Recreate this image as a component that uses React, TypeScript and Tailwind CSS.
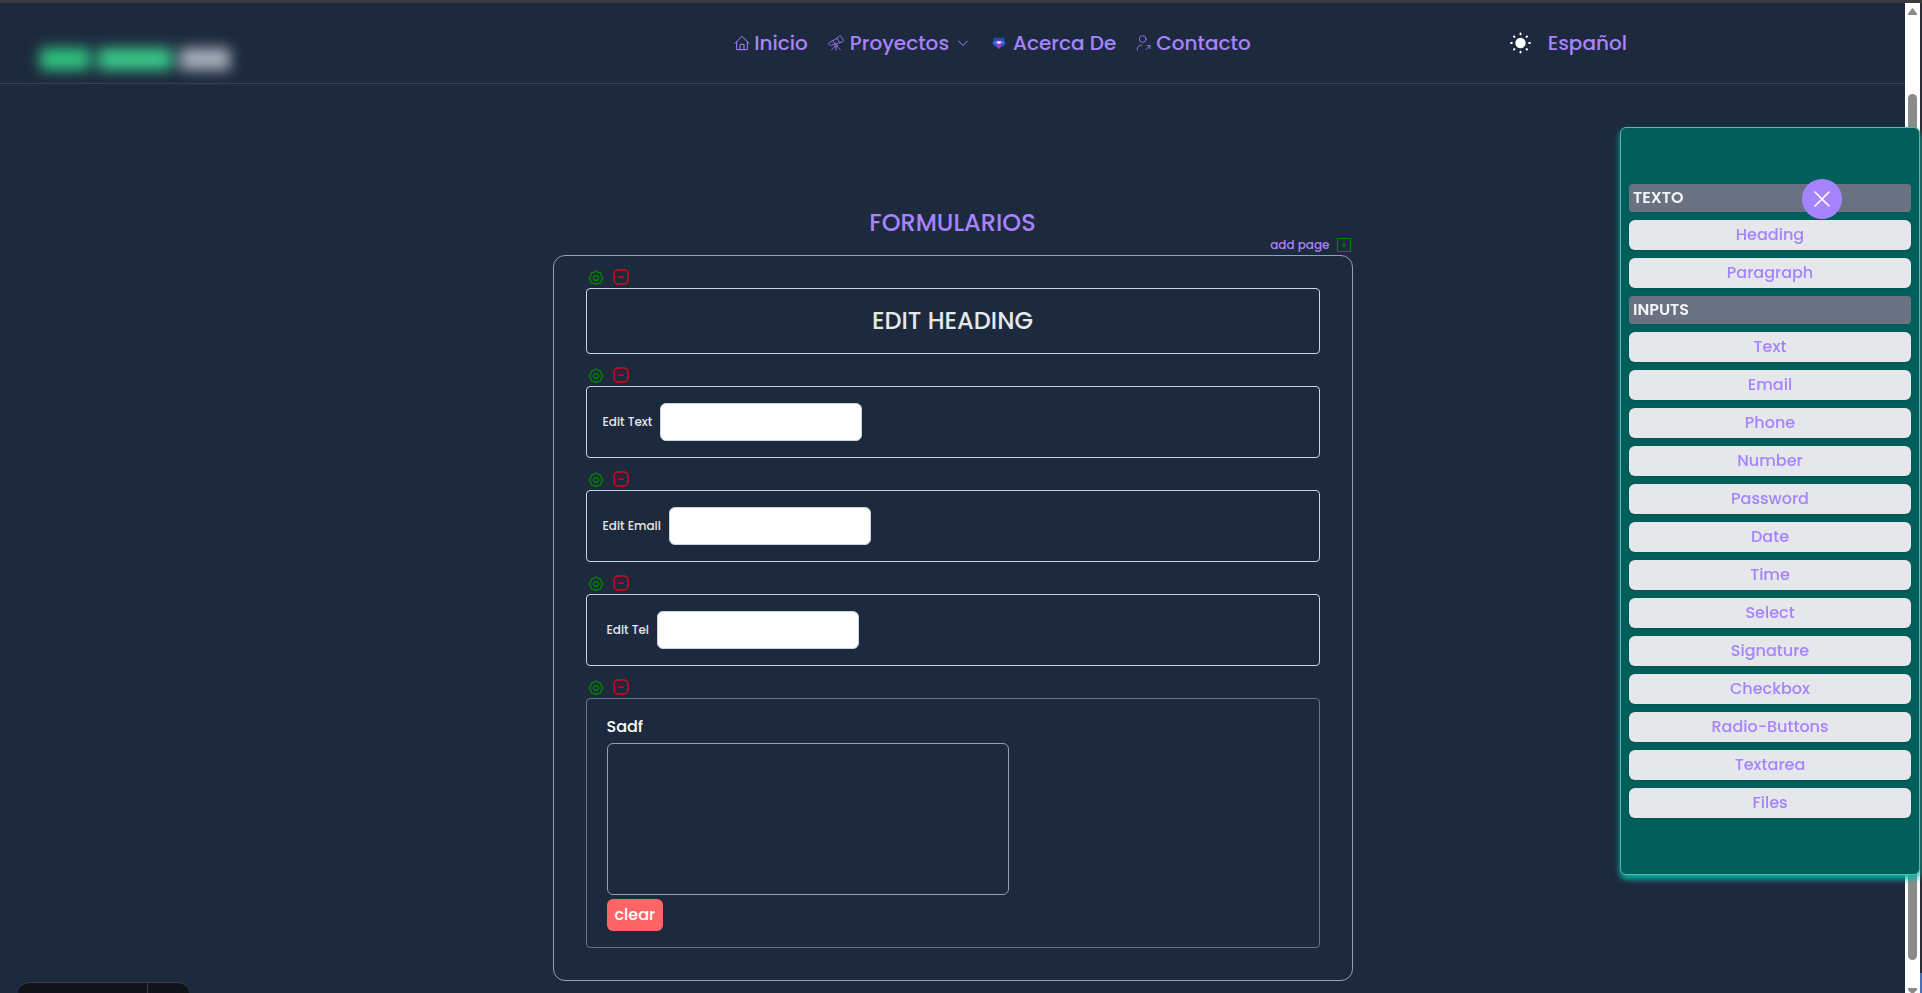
import React from "react";

type FieldType = "text" | "email" | "tel";

const textItems = ["Heading", "Paragraph"];
const inputItems = [
  "Text",
  "Email",
  "Phone",
  "Number",
  "Password",
  "Date",
  "Time",
  "Select",
  "Signature",
  "Checkbox",
  "Radio-Buttons",
  "Textarea",
  "Files",
];

function HomeIcon() {
  return (
    <svg className="size-4" viewBox="0 0 24 24" fill="none" stroke="currentColor" strokeWidth="1.5" strokeLinecap="round" strokeLinejoin="round" aria-hidden="true">
      <path d="M1.500 12.500 12 2l10.500 10.500M4 10.500V22h16V10.500" />
      <path d="M9 22v-8h6v8" />
    </svg>
  );
}

function TelescopeIcon() {
  return (
    <svg className="size-4" viewBox="0 0 24 24" fill="none" stroke="currentColor" strokeWidth="1.2" strokeLinecap="round" strokeLinejoin="round" aria-hidden="true">
      <path d="M17.500 1.200c.8-.4 1.600-.2 2 .6l3.300 6.400c.4.800.1 1.600-.7 1.900l-4.300 1.400-4.300-6.300z" />
      <path d="M13.500 5.200 2 11.200c-.9.500-1.200 1.400-.8 2.200l.6 1.200c.4.900 1.300 1.200 2.200.9l13.800-4M7.500 8.500l2.800 5" />
      <circle cx="12" cy="16" r="1.800" />
      <path d="M12 17.800V23M10.500 17 5 22.500M13.500 17l5.500 5.500" />
    </svg>
  );
}

function ChevronIcon() {
  return (
    <svg className="size-3" viewBox="0 0 12 12" fill="none" stroke="currentColor" strokeWidth="1" strokeLinecap="round" strokeLinejoin="round" aria-hidden="true">
      <path d="M1.500 4 6 8.500 10.500 4" />
    </svg>
  );
}

function BadgeIcon() {
  return (
    <svg className="size-5" viewBox="-2 -2 20 20" aria-hidden="true">
      <path d="M3 2l2.500 1.200L8 2.500l2.500.7L13 2l.6 4L15 8l-2 3-3 1.500L8 14l-2-1.500L3 11 1 8l1.400-2z" fill="#1e4fb0" />
      <path d="M5.500 5.500h5l.5 4L8 14 5 9.500z" fill="#a23fd0" />
      <path d="M5.800 6.500h4.400v1.300L8 8.800 5.800 7.800z" fill="#fff" />
      <path d="M3 6l2 .5v3L3 9zM13 6l-2 .5v3l2-.5z" fill="#2b7fff" />
    </svg>
  );
}

function ContactIcon() {
  return (
    <svg className="size-4" viewBox="0 0 24 24" fill="none" stroke="currentColor" strokeWidth="1.200" strokeLinecap="round" strokeLinejoin="round" aria-hidden="true">
      <circle cx="10" cy="6" r="5" />
      <path d="M2 23v-1.500c0-4 2.500-6.500 7-6.500M15 22l6-6M16.500 16H21v4.500" />
    </svg>
  );
}

function SunIcon() {
  return (
    <svg className="size-6" viewBox="0 0 24 24" fill="#fff" stroke="#fff" strokeLinecap="round" aria-hidden="true">
      <circle cx="12.500" cy="12" r="5.200" stroke="none" />
      <path strokeWidth="2" d="M12.500 2.600v.7M12.500 20.700v.7M3.100 12h.7M21.200 12h.7M6 5.500l.4.400M18.600 18.100l.4.400M6 18.500l.4-.4M18.600 5.900l.4-.4" />
    </svg>
  );
}

function GearIcon() {
  return (
    <svg className="size-4" viewBox="0 -1 16 16" fill="none" stroke="#008000" strokeWidth="1.400" strokeLinejoin="round" aria-hidden="true">
      <path d="M8 0.900 10.100 2.500 12.900 3.100 13.200 5.800 14.900 8 13.200 10.200 12.900 12.900 10.100 13.300 8 14.600 5.900 13.300 3.100 12.900 2.800 10.200 1.100 8 2.800 5.800 3.100 3.100 5.900 2.500z" />
      <circle cx="8" cy="8" r="2.500" />
    </svg>
  );
}

function RemoveIcon() {
  return (
    <svg className="size-4" viewBox="0 0 16 16" fill="none" stroke="#e30613" strokeWidth="1.400" strokeLinecap="round" aria-hidden="true">
      <rect x="1" y="1" width="14" height="14" rx="4" />
      <path d="M5.700 8h4.600" />
    </svg>
  );
}

function AddIcon() {
  return (
    <svg className="size-4" viewBox="0 0 16 16" fill="none" stroke="#008000" strokeWidth="1.200" aria-hidden="true">
      <path d="M1.500 1.500h13v13h-13zM8 5.500v5M5.500 8h5" />
    </svg>
  );
}

function Header() {
  return (
    <header className="grid h-[81px] grid-cols-[1fr_auto_1fr] border-b border-[#364153] pl-10">
      <div className="flex items-center gap-2 pt-8 blur-[7px]">
        <div className="h-[22px] w-[50px] bg-[#2fc481]" />
        <div className="h-[22px] w-[74px] bg-[#38c98a]" />
        <div className="h-[22px] w-[50px] bg-[#a9b1be]" />
      </div>
      <nav className="ml-10 flex items-center gap-5 text-xl font-medium text-[#a684ff]">
        <a href="#inicio" className="flex items-center gap-1">
          <HomeIcon />
          Inicio
        </a>
        <a href="#proyectos" className="flex items-center gap-1.5">
          <TelescopeIcon />
          Proyectos
          <span className="pl-0.5">
            <ChevronIcon />
          </span>
        </a>
        <a href="#acerca" className="flex items-center gap-1">
          <BadgeIcon />
          Acerca De
        </a>
        <a href="#contacto" className="flex items-center gap-1">
          <ContactIcon />
          Contacto
        </a>
      </nav>
      <div className="flex items-center justify-end gap-4 pr-[278px] text-xl font-medium text-[#a684ff]">
        <button type="button" aria-label="Tema">
          <SunIcon />
        </button>
        <button type="button">Español</button>
      </div>
    </header>
  );
}

function Block({ faint, children }: { faint?: boolean; children: React.ReactNode }) {
  return (
    <section>
      <div className="flex h-8 items-end gap-[9px] pb-[3px] pl-0.5">
        <button type="button" aria-label="Editar">
          <GearIcon />
        </button>
        <button type="button" aria-label="Eliminar">
          <RemoveIcon />
        </button>
      </div>
      <div className={faint ? "rounded border border-[#62748e] p-4" : "rounded border border-[#cad5e2] p-4"}>{children}</div>
    </section>
  );
}

function Field({ id, label, type, inset }: { id: string; label: string; type: FieldType; inset?: boolean }) {
  return (
    <div className={inset ? "flex items-center gap-2 pl-1" : "flex items-center gap-2"}>
      <label htmlFor={id} className="text-xs font-medium text-[#e5e7eb]">
        {label}
      </label>
      <input id={id} type={type} className="h-[38px] w-[202px] rounded-md border border-[#cad5e2] bg-white px-2 text-gray-900" />
    </div>
  );
}

function PanelTitle({ children }: { children: React.ReactNode }) {
  return <h2 className="h-7 rounded bg-[#6a7282] px-1 leading-[27px] font-semibold text-[#f3f4f6]">{children}</h2>;
}

function PanelItem({ label }: { label: string }) {
  return (
    <button type="button" className="h-[30px] rounded-md bg-[#e5e7eb] font-medium text-[#a684ff] shadow">
      {label}
    </button>
  );
}

function SidePanel() {
  return (
    <aside className="fixed top-[127px] right-0.5 w-[300px] rounded-md border border-[#5fb5ab] bg-[#005f5a] px-2 py-14 shadow-[0_4px_6px_#00bba7]">
      <div className="flex flex-col gap-2">
        <PanelTitle>TEXTO</PanelTitle>
        {textItems.map((label) => (
          <PanelItem key={label} label={label} />
        ))}
        <PanelTitle>INPUTS</PanelTitle>
        {inputItems.map((label) => (
          <PanelItem key={label} label={label} />
        ))}
      </div>
      <button type="button" aria-label="Cerrar" className="absolute top-[51px] right-[77px] flex size-10 items-center justify-center rounded-full bg-[#a684ff]">
        <svg className="size-5" viewBox="0 0 20 20" stroke="#fff" strokeWidth="1.600" strokeLinecap="round" aria-hidden="true">
          <path d="M3 3l14 14M17 3 3 17" />
        </svg>
      </button>
    </aside>
  );
}

function ScrollTrack() {
  return (
    <div className="flex w-[15px] flex-col items-center bg-white" aria-hidden="true">
      <svg className="mt-1 h-3 w-[9px]" viewBox="0 0 9 12" fill="#8b8b8b">
        <path d="M4.500 1 9 6.500V8H0V6.500z" />
      </svg>
      <div className="mt-[75px] mb-7 w-[9px] flex-1 rounded-full bg-[#8b8b8b]" />
      <svg className="h-[5px] w-[9px]" viewBox="0 0 9 5" fill="#8b8b8b">
        <path d="M0 0h9v2L6 5H3L0 2z" />
      </svg>
    </div>
  );
}

export default function App() {
  return (
    <div className="flex min-h-screen flex-col bg-[#1d293d] font-['Poppins',Inter,sans-serif]">
      <div className="h-[3px] bg-[#3b3b3d]" />
      <div className="flex flex-1">
        <div className="min-w-0 flex-1">
          <Header />
          <main className="mx-auto flex max-w-[800px] flex-col pt-[123px]">
            <h1 className="text-center text-2xl leading-8 font-medium text-[#a684ff]">FORMULARIOS</h1>
            <button type="button" className="mr-px mb-1 flex h-3 items-center gap-1.5 self-end text-xs font-medium text-[#a684ff]">
              add page
              <AddIcon />
            </button>
            <form className="rounded-xl border border-[#90a1b9] px-8 pb-8">
              <Block>
                <h2 className="text-center text-2xl font-medium text-[#e5e7eb]">EDIT HEADING</h2>
              </Block>
              <Block>
                <Field id="field-text" label="Edit Text" type="text" />
              </Block>
              <Block>
                <Field id="field-email" label="Edit Email" type="email" />
              </Block>
              <Block>
                <Field id="field-tel" label="Edit Tel" type="tel" inset />
              </Block>
              <Block faint>
                <div className="flex flex-col items-start gap-1 pl-1">
                  <p className="font-medium text-white">Sadf</p>
                  <canvas className="h-[152px] w-[402px] rounded-md border border-[#90a1b9]" aria-label="Sadf" />
                  <button type="button" className="h-8 rounded-md bg-[#ff6467] px-2 leading-none font-medium text-white">
                    clear
                  </button>
                </div>
              </Block>
            </form>
          </main>
        </div>
        <ScrollTrack />
        <div className="flex w-0.5 flex-col bg-[#2a2d33]">
          <div className="mt-auto h-5 bg-[#4a6fb5]" />
        </div>
      </div>
      <SidePanel />
      <div className="fixed bottom-0 left-[18px] flex h-[11px] w-[171px] overflow-hidden rounded-t-2xl border-t border-[#33404a] bg-[#101418]">
        <div className="w-[130px] border-r border-[#33404a]" />
      </div>
    </div>
  );
}
